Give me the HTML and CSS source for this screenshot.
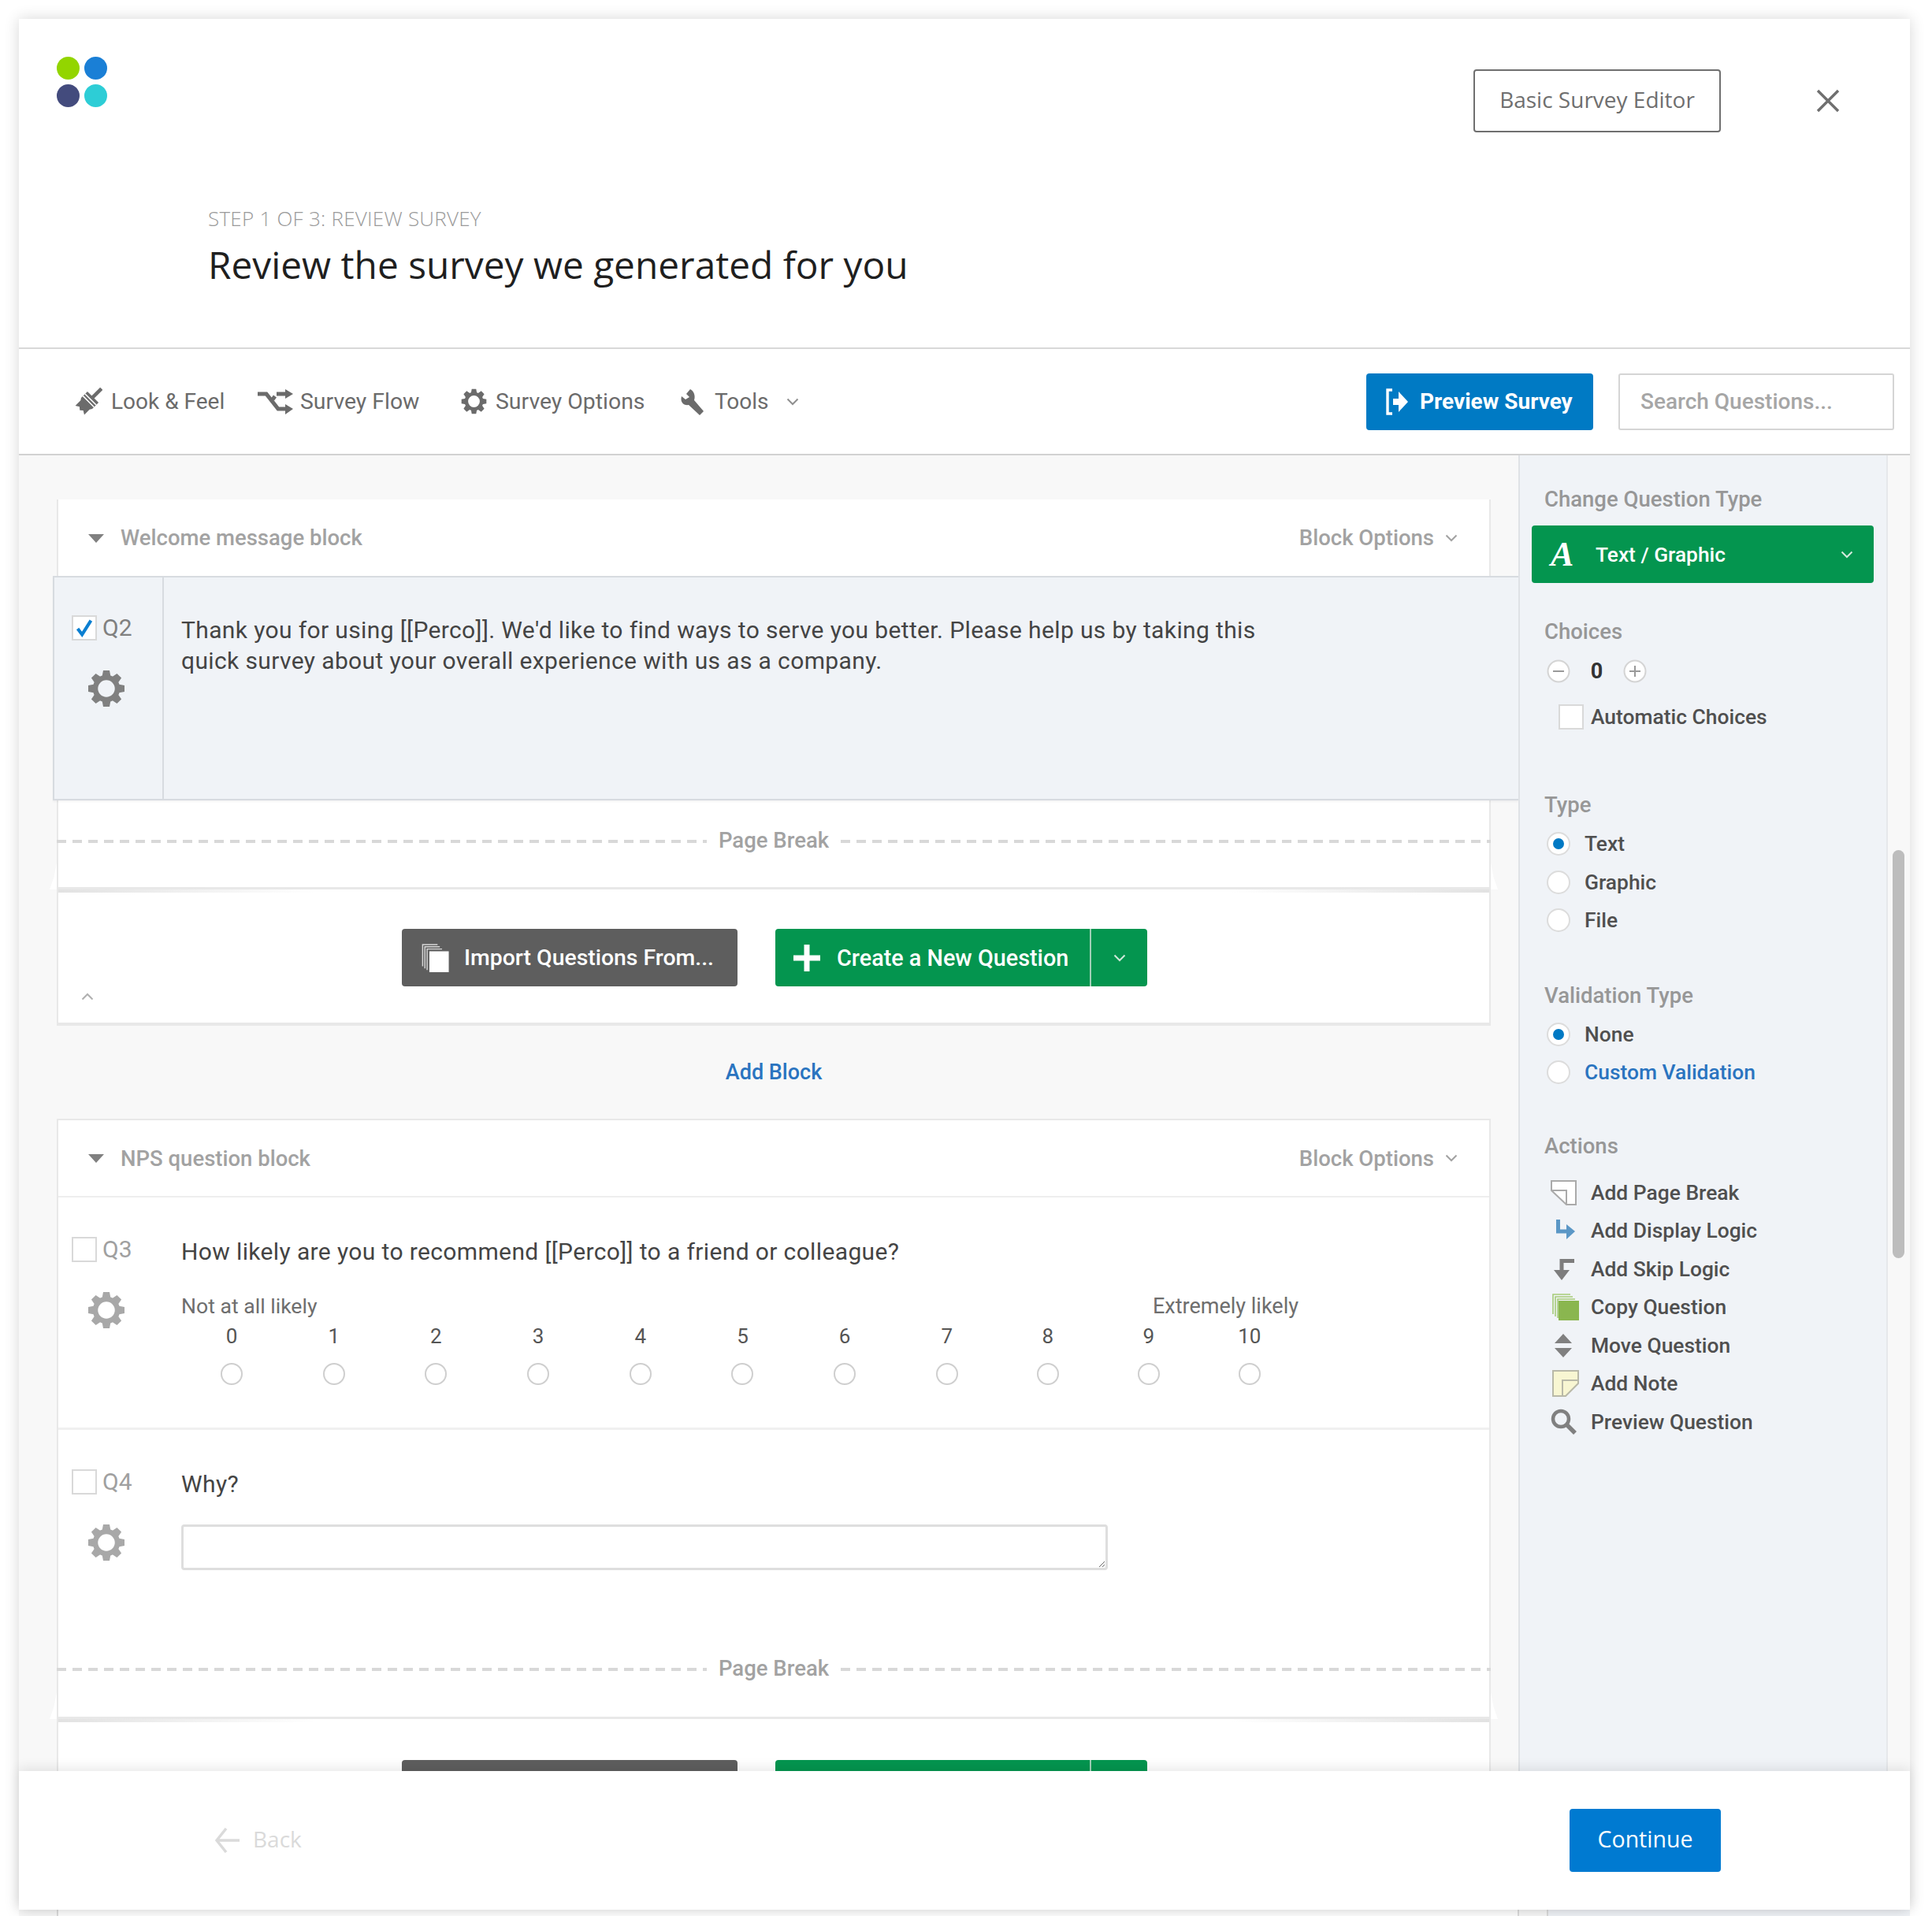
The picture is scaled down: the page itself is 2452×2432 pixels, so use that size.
FILE: index.html
```html
<!DOCTYPE html>
<html lang="en">
<head>
<meta charset="utf-8">
<title>Review survey</title>
<link rel="stylesheet" href="styles.css">
</head>
<body>
<svg class="defs" width="0" height="0" aria-hidden="true">
  <symbol id="gear" viewBox="0 0 48 48">
    <circle cx="24" cy="24" r="14" fill="none" stroke="currentColor" stroke-width="6.500"/>
    <g fill="currentColor">
      <path d="M20 1h8l1.500 8h-11z"/>
      <path d="M20 1h8l1.500 8h-11z" transform="rotate(45 24 24)"/>
      <path d="M20 1h8l1.500 8h-11z" transform="rotate(90 24 24)"/>
      <path d="M20 1h8l1.500 8h-11z" transform="rotate(135 24 24)"/>
      <path d="M20 1h8l1.500 8h-11z" transform="rotate(180 24 24)"/>
      <path d="M20 1h8l1.500 8h-11z" transform="rotate(225 24 24)"/>
      <path d="M20 1h8l1.500 8h-11z" transform="rotate(270 24 24)"/>
      <path d="M20 1h8l1.500 8h-11z" transform="rotate(315 24 24)"/>
    </g>
  </symbol>
  <symbol id="chev" viewBox="0 0 16 10">
    <path d="M1.500 1.500 8 8l6.500-6.500" fill="none" stroke="currentColor" stroke-width="2"/>
  </symbol>
  <symbol id="caret" viewBox="0 0 20 12">
    <path d="M0 1h20L10 12z" fill="currentColor"/>
  </symbol>
</svg>

<div class="page">
  <div class="modal">
    <header class="head">
      <div class="head-top">
        <div class="logo">
          <span class="dot dot-green"></span><span class="dot dot-blue"></span>
          <span class="dot dot-navy"></span><span class="dot dot-teal"></span>
        </div>
        <div class="head-actions">
          <button class="btn-outline">Basic Survey Editor</button>
          <svg class="close" viewBox="0 0 30 30"><path d="M2 2l26 26M28 2 2 28" fill="none" stroke="currentColor" stroke-width="3.400"/></svg>
        </div>
      </div>
      <div class="title-wrap">
        <div class="step">STEP 1 OF 3: REVIEW SURVEY</div>
        <h1 class="title">Review the survey we generated for you</h1>
      </div>
    </header>

    <nav class="toolbar">
      <a class="tool tool-look">
        <svg class="ic-brush" viewBox="-1 -1 38 38"><g transform="rotate(45 18 18)"><rect x="15.600" y="-7" width="4.800" height="17" fill="currentColor"/><path d="M7.500 9h21v12l-2 3v10l-5-3-3.500 3-3.500-3-5 3V24l-2-3z" fill="currentColor"/><path d="M7.500 13.500h21M7.500 17.500h21" stroke="#fff" stroke-width="1.600"/></g></svg>
        Look &amp; Feel
      </a>
      <a class="tool tool-flow">
        <svg class="ic-flow" viewBox="0 0 46 32"><g fill="none" stroke="currentColor" stroke-width="5"><path d="M0 6h11l15 19h11"/><path d="M24 6h13M22 9l-3 4"/></g><path d="M35 0l10 6-10 6zM35 19l10 6-10 7z" fill="currentColor"/></svg>
        Survey Flow
      </a>
      <a class="tool tool-opts">
        <svg class="ic-gear"><use href="#gear"/></svg>
        Survey Options
      </a>
      <a class="tool tool-tools">
        <svg class="ic-wrench" viewBox="0 0 34 34"><path d="M14 1l-5 6 4 4-5 3-5-4c-2 7 2 12 9 11l14 13 5-5L19 15c2-7-1-12-5-14z" fill="currentColor"/></svg>
        Tools
        <svg class="ic-chev"><use href="#chev"/></svg>
      </a>
      <div class="tool-right">
        <button class="btn-preview">
          <svg class="ic-preview" viewBox="0 0 30 34"><path d="M9 2H3v30h6" fill="none" stroke="#fff" stroke-width="3.400"/><path d="M10 13h7V4l12 13-12 13v-9h-7z" fill="#fff"/></svg>
          Preview Survey
        </button>
        <div class="search">Search Questions...</div>
      </div>
    </nav>

    <div class="editor">
      <main class="canvas">
        <section class="block">
          <div class="block-head">
            <svg class="ic-caret"><use href="#caret"/></svg>
            <span class="block-name">Welcome message block</span>
            <span class="block-opts">Block Options <svg class="ic-chev"><use href="#chev"/></svg></span>
          </div>
          <div class="q q-selected">
            <div class="q-side">
              <div class="q-id">
                <span class="check"><svg viewBox="0 0 30 30"><path d="M6 16l6 8L24 5" fill="none" stroke="#0b7fd1" stroke-width="4.400"/></svg></span>
                <span class="q-num">Q2</span>
              </div>
              <svg class="q-gear q-gear-dark"><use href="#gear"/></svg>
            </div>
            <div class="q-body">
              <p class="q-text">Thank you for using [[Perco]]. We'd like to find ways to serve you better. Please help us by taking this<br>quick survey about your overall experience with us as a company.</p>
            </div>
          </div>
          <div class="pagebreak">
            <div class="pb-line"><span class="dash"></span><span class="pb-label">Page Break</span><span class="dash"></span></div>
          </div>
          <div class="add-row">
            <button class="btn-import">
              <svg class="ic-import" viewBox="0 0 36 38"><path d="M1 30V1h20M4 33V4h20M7 35V7h20" fill="none" stroke="#d8d8d8" stroke-width="1.500"/><rect x="10" y="10" width="26" height="28" fill="#fff"/></svg>
              Import Questions From...
            </button>
            <div class="btn-create">
              <span class="create-main">
                <svg class="ic-plus" viewBox="0 0 34 34"><path d="M13.500 0h7v13.500H34v7H20.500V34h-7V20.500H0v-7h13.500z" fill="#fff"/></svg>
                Create a New Question
              </span>
              <span class="create-more"><svg class="ic-chev"><use href="#chev"/></svg></span>
            </div>
            <svg class="collapse"><use href="#chev"/></svg>
          </div>
        </section>

        <div class="add-block">Add Block</div>

        <section class="block">
          <div class="block-head block-head-line">
            <svg class="ic-caret"><use href="#caret"/></svg>
            <span class="block-name">NPS question block</span>
            <span class="block-opts">Block Options <svg class="ic-chev"><use href="#chev"/></svg></span>
          </div>
          <div class="q q-nps">
            <div class="q-side">
              <div class="q-id"><span class="check"></span><span class="q-num">Q3</span></div>
              <svg class="q-gear"><use href="#gear"/></svg>
            </div>
            <div class="q-body">
              <p class="q-text">How likely are you to recommend [[Perco]] to a friend or colleague?</p>
              <div class="anchors"><span>Not at all likely</span><span class="anchor-end">Extremely likely</span></div>
              <div class="scale">
                <div class="sc"><span>0</span><i class="dot-r"></i></div>
                <div class="sc"><span>1</span><i class="dot-r"></i></div>
                <div class="sc"><span>2</span><i class="dot-r"></i></div>
                <div class="sc"><span>3</span><i class="dot-r"></i></div>
                <div class="sc"><span>4</span><i class="dot-r"></i></div>
                <div class="sc"><span>5</span><i class="dot-r"></i></div>
                <div class="sc"><span>6</span><i class="dot-r"></i></div>
                <div class="sc"><span>7</span><i class="dot-r"></i></div>
                <div class="sc"><span>8</span><i class="dot-r"></i></div>
                <div class="sc"><span>9</span><i class="dot-r"></i></div>
                <div class="sc"><span>10</span><i class="dot-r"></i></div>
              </div>
            </div>
          </div>
          <div class="q q-why">
            <div class="q-side">
              <div class="q-id"><span class="check"></span><span class="q-num">Q4</span></div>
              <svg class="q-gear"><use href="#gear"/></svg>
            </div>
            <div class="q-body">
              <p class="q-text">Why?</p>
              <textarea class="why-input"></textarea>
            </div>
          </div>
          <div class="pagebreak pagebreak-2">
            <div class="pb-line"><span class="dash"></span><span class="pb-label">Page Break</span><span class="dash"></span></div>
          </div>
          <div class="add-row add-row-2">
            <button class="btn-import"></button>
            <div class="btn-create"><span class="create-main"></span><span class="create-more"></span></div>
          </div>
        </section>
      </main>

      <aside class="side">
        <div class="s-label s-first">Change Question Type</div>
        <div class="type-select">
          <span class="type-a">A</span>
          <span class="type-name">Text / Graphic</span>
          <svg class="ic-chev"><use href="#chev"/></svg>
        </div>

        <div class="s-label s-choices">Choices</div>
        <div class="stepper">
          <svg class="step-btn" viewBox="0 0 30 30"><circle cx="15" cy="15" r="13.500" fill="#fff" stroke="#d4d4d4" stroke-width="2"/><path d="M8 15h14" stroke="#999" stroke-width="2"/></svg>
          <span class="step-val">0</span>
          <svg class="step-btn" viewBox="0 0 30 30"><circle cx="15" cy="15" r="13.500" fill="#fff" stroke="#d4d4d4" stroke-width="2"/><path d="M8 15h14M15 8v14" stroke="#999" stroke-width="2"/></svg>
        </div>
        <div class="auto"><span class="check"></span><span class="s-item">Automatic Choices</span></div>

        <div class="s-label s-type">Type</div>
        <div class="s-radio s-radio-first"><i class="radio on"></i><span class="s-item">Text</span></div>
        <div class="s-radio"><i class="radio"></i><span class="s-item">Graphic</span></div>
        <div class="s-radio"><i class="radio"></i><span class="s-item">File</span></div>

        <div class="s-label s-sec">Validation Type</div>
        <div class="s-radio s-radio-first"><i class="radio on"></i><span class="s-item">None</span></div>
        <div class="s-radio"><i class="radio"></i><span class="s-item s-link">Custom Validation</span></div>

        <div class="s-label s-sec s-actions">Actions</div>
        <div class="actions">
          <div class="act"><span class="act-ic"><svg width="33" height="32" viewBox="0 0 33 32"><path d="M1 1h31v30H20L1 13z" fill="#fff" stroke="#aaa" stroke-width="2"/><path d="M1 13h19v18" fill="none" stroke="#aaa" stroke-width="2"/></svg></span><span class="s-item">Add Page Break</span></div>
          <div class="act"><span class="act-ic"><svg class="shift-r" width="26" height="28" viewBox="0 0 26 28"><path d="M3.500 0v15h12" fill="none" stroke="#5b97c6" stroke-width="5"/><path d="M14 6l11 9-11 10z" fill="#5b97c6"/></svg></span><span class="s-item">Add Display Logic</span></div>
          <div class="act"><span class="act-ic"><svg width="27" height="28" viewBox="0 0 27 28"><path d="M27 3.500H11V18" fill="none" stroke="#7d7d7d" stroke-width="5"/><path d="M1 15h20L11 28z" fill="#7d7d7d"/></svg></span><span class="s-item">Add Skip Logic</span></div>
          <div class="act"><span class="act-ic"><svg class="shift-r" width="34" height="34" viewBox="0 0 34 34"><path d="M1 26V1h22M4 29V4h22M7 31V7h22" fill="none" stroke="#a6cb78" stroke-width="1.600"/><rect x="8" y="9" width="26" height="25" fill="#8ab64f"/></svg></span><span class="s-item">Copy Question</span></div>
          <div class="act"><span class="act-ic"><svg width="24" height="30" viewBox="0 0 24 30"><path d="M12 0l11 12H1zM1 18h22L12 30z" fill="#808080"/></svg></span><span class="s-item">Move Question</span></div>
          <div class="act"><span class="act-ic"><svg class="shift-r" width="34" height="34" viewBox="0 0 34 34"><path d="M1 1h32v16L17 33H1z" fill="#f8f6d2" stroke="#b9b9a8" stroke-width="2"/><path d="M33 13H13v20" fill="none" stroke="#b9b9a8" stroke-width="2"/></svg></span><span class="s-item">Add Note</span></div>
          <div class="act"><span class="act-ic"><svg width="33" height="33" viewBox="0 0 33 33"><circle cx="13" cy="13" r="10" fill="none" stroke="#808080" stroke-width="4.500"/><path d="M20 20l11 11" stroke="#808080" stroke-width="5.500"/></svg></span><span class="s-item">Preview Question</span></div>
        </div>
      </aside>

      <div class="scroll"><span class="thumb"></span></div>
    </div>

    <footer class="foot">
      <a class="back">
        <svg class="ic-back" viewBox="0 0 32 32"><path d="M15 1 3 16l12 15M3 16h29" fill="none" stroke="currentColor" stroke-width="3.400"/></svg>
        <span class="back-label">Back</span>
      </a>
      <button class="btn-continue">Continue</button>
    </footer>
  </div>
  <div class="peek"><span class="peek-a"></span><span class="peek-b"></span><span class="peek-c"></span><span class="peek-d"></span></div>
</div>
</body>
</html>
```

FILE: styles.css
```css
* { box-sizing: border-box; }
html, body { margin: 0; height: 2432px; overflow: hidden; background: #fff; }
body { font-family: Roboto, "Liberation Sans", sans-serif; color: #555; }
button { font: inherit; border: 0; padding: 0; }
p, h1 { margin: 0; }
.defs { position: absolute; }

.page { width: 2452px; padding: 24px 28px 0 24px; }
.modal {
  position: relative; z-index: 1;
  height: 2400px; display: flex; flex-direction: column;
  background: #fff; box-shadow: 0 0 18px rgba(0,0,0,.16);
}

/* header */
.head { height: 419px; flex: none; padding: 48px 89px 0 48px; border-bottom: 2px solid #d8d8d8; font-family: "Open Sans", sans-serif; }
.head-top { display: flex; justify-content: space-between; align-items: flex-start; height: 189px; }
.logo { display: grid; grid-template-columns: 29px 29px; gap: 6px; }
.dot { width: 29px; height: 29px; border-radius: 50%; }
.dot-green { background: #93d500; }
.dot-blue { background: #1a7fd6; }
.dot-navy { background: #434b7d; }
.dot-teal { background: #2dcdd6; }
.head-actions { display: flex; align-items: center; margin-top: 16px; }
.btn-outline { width: 314px; height: 80px; padding-bottom: 5px; background: #fff; border: 2px solid #6f6f6f; border-radius: 4px; color: #6f6f6f; font-size: 28px; font-family: "Open Sans", sans-serif; }
.close { width: 30px; height: 30px; margin-left: 121px; color: #6f6f6f; }
.title-wrap { padding-left: 192px; }
.step { font-size: 26px; line-height: 32px; color: #9a9a9a; font-weight: 300; letter-spacing: .25px; }
.title { font-size: 47.800px; line-height: 64px; font-weight: 400; color: #1f1f1f; margin-top: 11px; }

/* toolbar */
.toolbar { height: 135px; flex: none; display: flex; align-items: center; padding: 0 20px 0 70px; border-bottom: 2px solid #d2d2d2; }
.tool { display: flex; align-items: center; font-size: 28.400px; color: #6b6b6b; white-space: nowrap; }
.tool-look { width: 233px; gap: 11px; font-size: 28px; }
.tool-flow { width: 258px; gap: 8px; }
.tool-opts { width: 277px; gap: 11px; }
.tool-tools { gap: 11px; font-size: 28px; }
.ic-brush { width: 36px; height: 38px; color: #6b6b6b; }
.ic-flow { width: 46px; height: 32px; color: #6b6b6b; }
.ic-gear { width: 33px; height: 33px; color: #6b6b6b; }
.ic-wrench { width: 34px; height: 34px; color: #6b6b6b; }
.ic-chev { width: 16px; height: 10px; color: #8f8f8f; }
.tool-tools .ic-chev { margin-left: 11px; }
.tool-right { margin-left: auto; display: flex; gap: 32px; }
.btn-preview { width: 288px; height: 72px; display: flex; align-items: center; gap: 14px; padding-left: 24px; background: #007ac4; color: #fff; font-size: 28px; font-weight: 700; border-radius: 4px; font-family: Roboto, sans-serif; }
.ic-preview { width: 30px; height: 34px; }
.search { width: 350px; height: 72px; display: flex; align-items: center; padding-left: 26px; border: 2px solid #d5d5d5; border-radius: 3px; color: #a6a6a6; font-size: 28px; font-weight: 500; }

/* editor */
.editor { flex: 1; min-height: 0; display: flex; overflow: hidden; background: #f8f8f8; }
.canvas { width: 1903px; flex: none; padding: 56px 35px 0 48px; }
.block { background: #fff; border-left: 2px solid #e8e8e8; border-right: 2px solid #e8e8e8; }
.block-head { height: 97px; display: flex; align-items: center; padding: 0 40px 0 38px; color: #a2a2a2; font-size: 27.500px; font-weight: 500; }
.block-head-line { height: 100px; border-bottom: 2px solid #eeeeee; border-top: 2px solid #e8e8e8; }
.ic-caret { width: 20px; height: 12px; color: #808080; margin-right: 21px; }
.block-opts { margin-left: auto; display: flex; align-items: center; gap: 14px; }
.block-opts .ic-chev { color: #a2a2a2; }

.q { display: flex; }
.q-selected { height: 285px; margin: 0 -37px 0 -7px; background: #f0f3f7; border: 2px solid #d7dbe0; border-right: 0; box-shadow: 0 2px 2px rgba(0,0,0,.04); }
.q-selected .q-side { width: 139px; border-right: 2px solid #d7dbe0; padding: 48px 0 0 22px; }
.q-selected .q-body { padding: 47px 0 0 22px; }
.q-side { width: 156px; flex: none; padding: 50px 0 0 17px; }
.q-id { display: flex; align-items: center; gap: 7px; height: 32px; }
.check { display: block; width: 32px; height: 32px; flex: none; background: #fff; border: 2px solid #d9d9d9; }
.check svg { display: block; width: 28px; height: 28px; }
.q-num { font-size: 30px; color: #a0a0a0; line-height: 32px; }
.q-selected .q-num { color: #808080; }
.q-gear { display: block; width: 48px; height: 48px; margin: 37px 0 0 20px; color: #a8a8a8; }
.q-gear-dark { color: #808080; }
.q-body { flex: 1; padding-top: 49px; }
.q-text { font-size: 30px; line-height: 39px; color: #444; font-weight: 400; letter-spacing: .37px; }

.q-nps { height: 295px; border-bottom: 3px solid #f0f0f0; }
.anchors { display: flex; justify-content: space-between; width: 1418px; margin-top: 32px; font-size: 26.600px; line-height: 36px; color: #6e6e6e; }
.anchor-end { font-size: 27px; }
.scale { display: grid; grid-template-columns: repeat(7, 129.700px) repeat(4, 128px); margin: 2px 0 0 0; }
.sc { display: flex; flex-direction: column; align-items: center; font-size: 26px; line-height: 36px; color: #555; width: 128px; }
.dot-r { display: block; width: 28px; height: 28px; margin-top: 16px; border: 2.500px solid #cfcfcf; border-radius: 50%; background: #fff; }
.q-why { height: 267px; }
.why-input { display: block; width: 1176px; height: 58px; margin-top: 32px; border: 3px solid #dedede; border-radius: 4px; background: #fff; resize: both; outline: 0; }

.pagebreak { position: relative; height: 113px; padding-top: 36px; border-bottom: 3px solid #e8e8e8; }
.pagebreak-2 { height: 100px; padding-top: 21px; }
.pagebreak::before, .pagebreak::after { content: ""; position: absolute; bottom: -3px; width: 9px; height: 34px; background: #fff; }
.pagebreak::before { left: -11px; clip-path: polygon(100% 0, 100% 100%, 0 100%, 60% 55%); }
.pagebreak::after { right: -11px; clip-path: polygon(0 0, 0 100%, 100% 100%, 40% 55%); }
.pb-line { display: flex; align-items: center; height: 32px; margin: 0 -2px; }
.dash { flex: 1; height: 4px; background: repeating-linear-gradient(90deg, #d8d8d8 0 12px, transparent 12px 20px); }
.pb-label { padding: 0 15px 3px; font-size: 27.500px; color: #a2a2a2; font-weight: 500; }

.add-row { position: relative; height: 173px; display: flex; gap: 48px; padding: 50px 0 0 436px; border-bottom: 4px solid #e8e8e8; background: linear-gradient(90deg, #e2e2e2, #fff 18%, #fff 82%, #e2e2e2) top / 100% 4px no-repeat #fff; }
.add-row-2 { padding-top: 52px; }
.btn-import { width: 426px; height: 73px; display: flex; align-items: center; gap: 19px; padding-left: 25px; background: #5e5e5e; color: #fff; border-radius: 4px; font-size: 28.400px; font-weight: 500; font-family: Roboto, sans-serif; }
.ic-import { width: 35px; height: 36px; }
.btn-create { width: 472px; height: 73px; display: flex; background: #04954f; border-radius: 4px; color: #fff; font-size: 28.800px; font-weight: 500; }
.create-main { flex: 1; display: flex; align-items: center; gap: 21px; padding-left: 23px; border-right: 2px solid #9fd0b6; }
.ic-plus { width: 34px; height: 34px; }
.create-more { width: 71px; display: flex; align-items: center; justify-content: center; }
.create-more .ic-chev { color: #cfe8da; }
.collapse { position: absolute; left: 29px; bottom: 28px; width: 16px; height: 10px; color: #b0b0b0; transform: rotate(180deg); }
.add-block { height: 118px; display: flex; align-items: center; justify-content: center; font-size: 27px; font-weight: 500; color: #2a74c0; }

/* sidebar */
.side { width: 469px; flex: none; padding: 0 0 0 32px; background: #f0f3f7; border-left: 2px solid #dfe2e6; border-right: 2px solid #e6e8eb; font-size: 26.400px; }
.s-label { height: 32px; line-height: 32px; color: #979797; font-weight: 500; font-size: 27.500px; margin-left: -1px; }
.s-first { margin-top: 40px; }
.type-select { display: flex; align-items: center; width: 434px; height: 73px; margin: 17px 0 0 -17px; padding: 0 26px 0 24px; background: #04954f; border-radius: 4px; color: #fff; font-weight: 500; }
.type-a { width: 57px; font: italic 700 44px "Liberation Serif", serif; }
.type-name { flex: 1; font-size: 26.300px; }
.type-select .ic-chev { color: #d4eadd; }
.s-choices { margin-top: 46px; }
.stepper { display: flex; align-items: center; height: 40px; margin: 14px 0 0 2px; }
.step-btn { width: 30px; height: 30px; }
.step-val { width: 67px; text-align: center; font-size: 27px; font-weight: 700; color: #333; }
.auto { display: flex; align-items: center; gap: 9px; height: 32px; margin: 22px 0 0 17px; }
.s-item { color: #4f4f4f; font-weight: 500; white-space: nowrap; }
.s-type { margin-top: 80px; }
.s-radio { display: flex; align-items: center; gap: 18px; height: 48.500px; margin-left: 2px; }
.s-radio-first { margin-top: 9px; }
.radio { position: relative; display: block; width: 30px; height: 30px; border: 2px solid #dcdcdc; border-radius: 50%; background: #fff; }
.radio.on::after { content: ""; position: absolute; inset: 6px; border-radius: 50%; background: #0079c4; }
.s-link { color: #2a74c0; }
.s-sec { margin-top: 55px; }
.s-actions { margin-top: 53px; }
.actions { margin-top: 19px; }
.act { display: flex; align-items: center; height: 48.500px; }
.act-ic { width: 46px; margin-right: 12px; display: flex; justify-content: center; }
.shift-r { margin-left: 6px; }

.scroll { flex: 1; padding: 501px 7px 0 6px; }
.thumb { display: block; width: 15px; height: 518px; border-radius: 8px; background: #bdbdbd; }

/* footer */
.foot { position: relative; height: 176px; flex: none; display: flex; align-items: center; justify-content: space-between; padding: 0 240px 0 248px; background: #fff; box-shadow: 0 -4px 14px rgba(0,0,0,.09); font-family: "Open Sans", sans-serif; }
.back { display: flex; align-items: center; gap: 17px; color: #dadada; font-size: 28px; }
.back-label { margin-bottom: 5px; }
.ic-back { width: 32px; height: 32px; }
.btn-continue { width: 192px; height: 80px; padding-bottom: 5px; background: #007ad1; color: #fff; border-radius: 4px; font-family: "Open Sans", sans-serif; font-size: 28.500px; font-weight: 500; }

.peek { display: flex; height: 8px; width: 2400px; }
.peek-a { width: 48px; background: #f8f8f8; }
.peek-b { width: 1856px; background: #fff; border-left: 2px solid #dcdcdc; border-right: 2px solid #dcdcdc; }
.peek-c { width: 35px; background: #f8f8f8; }
.peek-d { flex: 1; background: #f0f3f7; border-left: 2px solid #dcdcdc; }
```
